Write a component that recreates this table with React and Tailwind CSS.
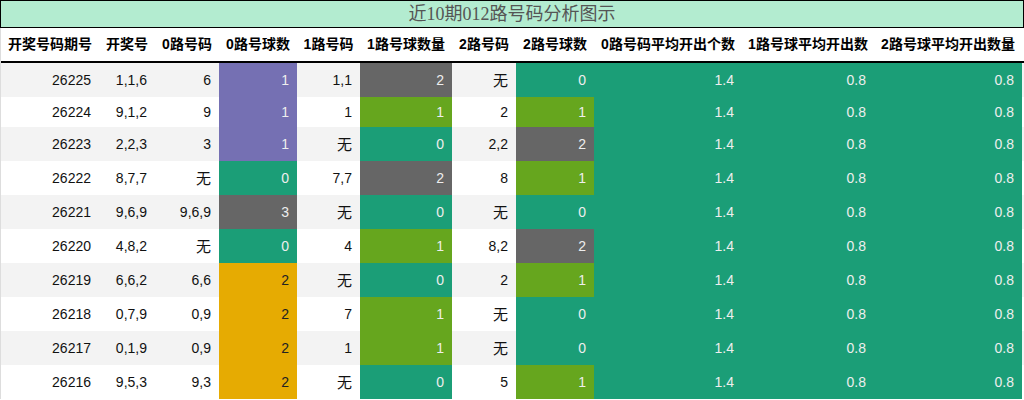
import React from "react";

const P = "bg-[#7570b3] text-[#eeeeee]";
const G = "bg-[#666666] text-[#eeeeee]";
const T = "bg-[#1b9e77] text-[#eeeeee]";
const L = "bg-[#66a61e] text-[#eeeeee]";
const Y = "bg-[#e6ab02] text-[#222222]";

const headers = [
  "开奖号码期号",
  "开奖号",
  "0路号码",
  "0路号球数",
  "1路号码",
  "1路号球数量",
  "2路号码",
  "2路号球数",
  "0路号码平均开出个数",
  "1路号球平均开出数",
  "2路号球平均开出数量",
];

const rows = [
  ["26225", "1,1,6", "6", ["1", P], "1,1", ["2", G], "无", ["0", T]],
  ["26224", "9,1,2", "9", ["1", P], "1", ["1", L], "2", ["1", L]],
  ["26223", "2,2,3", "3", ["1", P], "无", ["0", T], "2,2", ["2", G]],
  ["26222", "8,7,7", "无", ["0", T], "7,7", ["2", G], "8", ["1", L]],
  ["26221", "9,6,9", "9,6,9", ["3", G], "无", ["0", T], "无", ["0", T]],
  ["26220", "4,8,2", "无", ["0", T], "4", ["1", L], "8,2", ["2", G]],
  ["26219", "6,6,2", "6,6", ["2", Y], "无", ["0", T], "2", ["1", L]],
  ["26218", "0,7,9", "0,9", ["2", Y], "7", ["1", L], "无", ["0", T]],
  ["26217", "0,1,9", "0,9", ["2", Y], "1", ["1", L], "无", ["0", T]],
  ["26216", "9,5,3", "9,3", ["2", Y], "无", ["0", T], "5", ["1", L]],
];

const grid =
  "grid grid-cols-[98px_56px_64px_78px_63px_92px_64px_78px_148px_132px_148px]";

export default function App() {
  return (
    <div
      className="w-[1024px] h-[400px] overflow-hidden bg-white"
      style={{ fontFamily: '"Liberation Sans", "Noto Sans CJK SC", sans-serif' }}
    >
      <div
        className="h-[28px] border border-black bg-[#b3ecd0] flex items-center justify-center text-[18px] text-[#555555] leading-none"
        style={{ fontFamily: '"Liberation Serif", "Noto Sans CJK SC", serif' }}
      >
        近10期012路号码分析图示
      </div>
      <div className="border-l border-[#dddddd]">
        <div className={`${grid} h-[35px] border-b-2 border-black`}>
          {headers.map((h) => (
            <div
              key={h}
              className="flex items-center justify-center text-[14px] font-bold text-black whitespace-nowrap"
            >
              {h}
            </div>
          ))}
        </div>
        {rows.map((r, i) => {
          const stripe = i % 2 === 0 ? "bg-[#f3f3f3]" : "bg-white";
          const hasCjk = r.includes("无");
          const h = hasCjk ? "h-[34px]" : "h-[30px]";
          const cells = [...r, ["1.4", T], ["0.8", T], ["0.8", T]];
          return (
            <div key={r[0]} className={`${grid} ${h} ${stripe}`}>
              {cells.map((c, j) => {
                const isArr = Array.isArray(c);
                const text = isArr ? c[0] : c;
                const cls = isArr ? c[1] : "text-[#111111]";
                return (
                  <div
                    key={j}
                    className={`flex items-center justify-end pr-2 text-[14px] whitespace-nowrap ${cls}`}
                  >
                    {text === "无" ? (
                      <span className="relative top-[1px] text-[15px]">无</span>
                    ) : (
                      text
                    )}
                  </div>
                );
              })}
            </div>
          );
        })}
      </div>
    </div>
  );
}
